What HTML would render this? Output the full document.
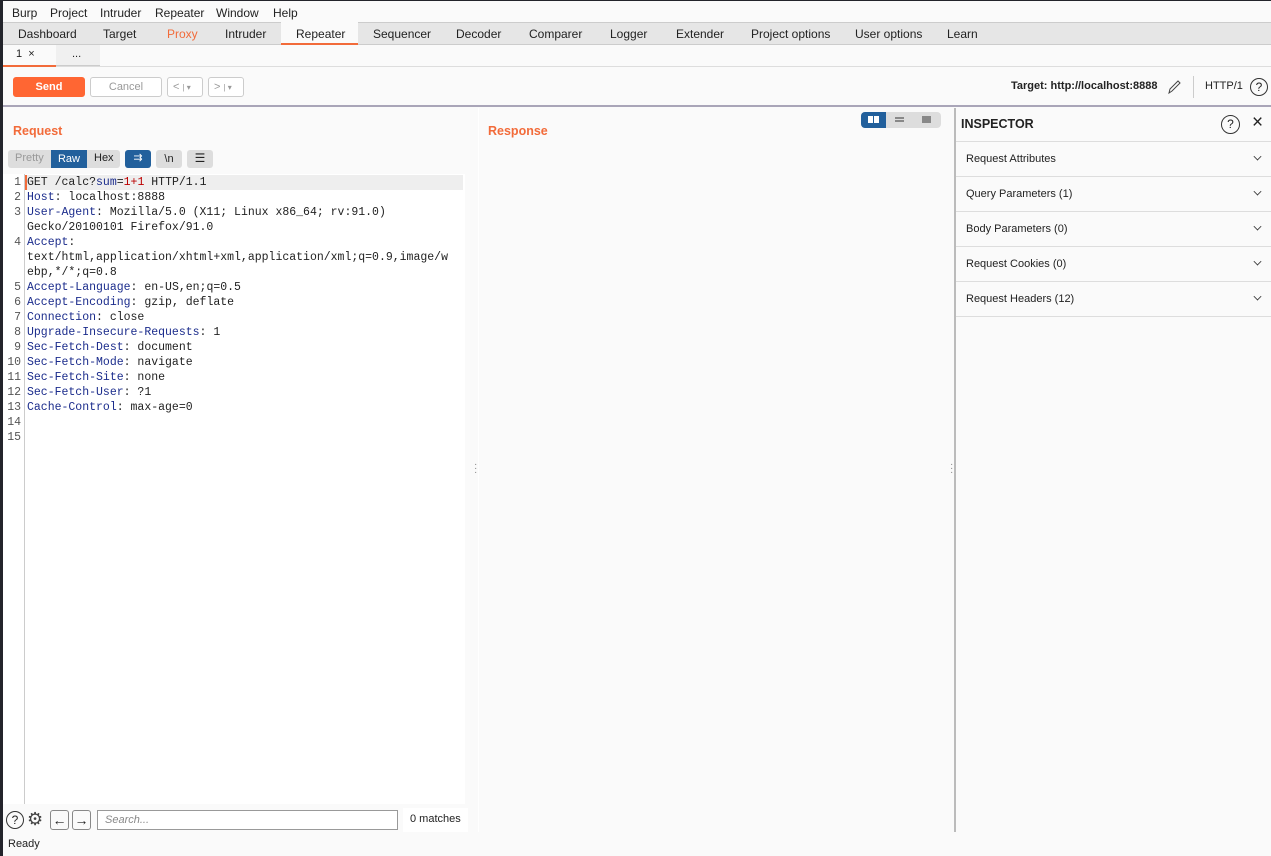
<!DOCTYPE html>
<html><head><meta charset="utf-8"><style>
*{box-sizing:border-box;margin:0;padding:0}
body{width:1271px;height:856px;overflow:hidden;background:#fafafa;font-family:"Liberation Sans",sans-serif;font-size:12px;color:#222;position:relative}
.abs{position:absolute}
.leftbar{left:0;top:0;width:3px;height:856px;background:#23242b}
.menu{left:3px;top:0;right:0;height:22px;background:#fafafa;border-top:1px solid #23242b}
.menu span{position:absolute;top:5px;font-size:12px}
.tabs{left:3px;top:22px;right:0;height:23px;background:#e6e6e6;border-top:1px solid #ccc;border-bottom:1px solid #ccc}
.tabs span{position:absolute;top:4px;font-size:12px}
.sub{left:3px;top:45px;right:0;height:22px;background:#fafafa;border-bottom:1px solid #ddd}
.btn{position:absolute;height:20px;border:1px solid #ccc;border-radius:3px;background:#fff;font-size:11px;color:#999;text-align:center;line-height:18px}
.mono{font-family:"Liberation Mono",monospace;font-size:11.5px;line-height:15px}
.k{color:#1b2c8c}
.insp div.row{position:absolute;left:0;right:0;height:35px;border-bottom:1px solid #ddd;font-size:11px;padding:11px 10px}
.chev{position:absolute;right:10px;top:11px;width:7px;height:7px;border-right:1.5px solid #333;border-bottom:1.5px solid #333;transform:rotate(45deg) scale(.8)}
</style></head><body>
<div class="abs leftbar"></div>
<div class="abs menu">
<span style="left:9px">Burp</span><span style="left:47px">Project</span><span style="left:97px">Intruder</span><span style="left:152px">Repeater</span><span style="left:213px">Window</span><span style="left:270px">Help</span>
</div>
<div class="abs tabs">
<span style="left:15px">Dashboard</span><span style="left:100px">Target</span><span style="left:164px;color:#f26b3a">Proxy</span><span style="left:222px">Intruder</span>
<div class="abs" style="left:278px;top:-1px;width:77px;height:23px;background:#fafafa;border-bottom:2px solid #f26b3a"></div>
<span style="left:293px">Repeater</span><span style="left:370px">Sequencer</span><span style="left:453px">Decoder</span><span style="left:526px">Comparer</span><span style="left:607px">Logger</span><span style="left:673px">Extender</span><span style="left:748px">Project options</span><span style="left:852px">User options</span><span style="left:944px">Learn</span>
</div>
<div class="abs sub">
<div class="abs" style="left:0;top:0;width:53px;height:22px;border-bottom:2px solid #f26b3a;font-size:11px;padding:3px 13px">1 &nbsp;×</div>
<div class="abs" style="left:53px;top:0;width:44px;height:21px;border-bottom:1px solid #ccc;background:#f0f0f0;font-size:11px;padding:3px 16px">...</div>
</div>
<div class="abs" style="left:3px;top:67px;right:0;height:40px;background:#fafafa;border-bottom:2px solid #a9a5b8"></div>
<div class="btn" style="left:13px;top:77px;width:72px;background:#ff6633;border-color:#ff6633;color:#fff;font-weight:bold">Send</div>
<div class="btn" style="left:90px;top:77px;width:72px">Cancel</div>
<div class="btn" style="left:167px;top:77px;width:36px;text-align:left;padding-left:5px">&lt; <span style="font-size:8px">| ▾</span></div>
<div class="btn" style="left:208px;top:77px;width:36px;text-align:left;padding-left:5px">&gt; <span style="font-size:8px">| ▾</span></div>
<div class="abs" style="left:1011px;top:80px;font-size:11px;font-weight:bold">Target: http://localhost:8888</div>
<svg class="abs" style="left:1166px;top:78px" width="16" height="18"><path d="M3 15 L4 11 L12 3 L14 5 L6 13 Z" fill="none" stroke="#444" stroke-width="1"/></svg>
<div class="abs" style="left:1193px;top:76px;width:1px;height:22px;background:#ccc"></div>
<div class="abs" style="left:1205px;top:80px;font-size:11px">HTTP/1</div>
<div class="abs" style="left:1250px;top:78px;width:18px;height:18px;border:1.3px solid #333;border-radius:50%;font-size:12px;text-align:center;line-height:16px">?</div>

<!-- request panel -->
<div class="abs" style="left:3px;top:108px;width:469px;height:724px;background:#fafafa"></div>
<div class="abs" style="left:13px;top:124px;font-size:12.5px;font-weight:bold;color:#f26b3a">Request</div>
<div class="abs" style="left:8px;top:150px;width:112px;height:18px;background:#ddd;border-radius:3px"></div>
<div class="abs" style="left:15px;top:152px;font-size:11px;color:#999">Pretty</div>
<div class="abs" style="left:51px;top:150px;width:36px;height:18px;background:#22609c;color:#fff;font-size:11px;text-align:center;line-height:18px">Raw</div>
<div class="abs" style="left:94px;top:152px;font-size:11px">Hex</div>
<div class="abs" style="left:125px;top:150px;width:26px;height:18px;background:#22609c;border-radius:3px;color:#fff;text-align:center;line-height:17px;font-size:11px">⇉</div>
<div class="abs" style="left:156px;top:150px;width:26px;height:18px;background:#ddd;border-radius:3px;text-align:center;line-height:18px;font-size:11px">\n</div>
<div class="abs" style="left:187px;top:150px;width:26px;height:18px;background:#ddd;border-radius:3px;text-align:center;line-height:17px;font-size:12px">☰</div>
<div class="abs" style="left:3px;top:174px;width:462px;height:630px;background:#fff"></div>
<div class="abs" style="left:24px;top:174px;width:1px;height:630px;background:#ccc"></div>
<div class="abs" style="left:25px;top:175px;width:438px;height:15px;background:#eee"></div>
<div class="abs" style="left:25px;top:175px;width:2px;height:15px;background:#f26b3a"></div>
<div class="abs mono" style="left:5px;top:175px;color:#555;text-align:right;width:16px">1<br>2<br>3<br><br>4<br><br><br>5<br>6<br>7<br>8<br>9<br>10<br>11<br>12<br>13<br>14<br>15</div>
<div class="abs mono" style="left:27px;top:175px;white-space:pre">GET /calc?<span class="k">sum</span>=<span style="color:#b00">1+1</span> HTTP/1.1
<span class="k">Host</span>: localhost:8888
<span class="k">User-Agent</span>: Mozilla/5.0 (X11; Linux x86_64; rv:91.0)
Gecko/20100101 Firefox/91.0
<span class="k">Accept</span>:
text/html,application/xhtml+xml,application/xml;q=0.9,image/w
ebp,*/*;q=0.8
<span class="k">Accept-Language</span>: en-US,en;q=0.5
<span class="k">Accept-Encoding</span>: gzip, deflate
<span class="k">Connection</span>: close
<span class="k">Upgrade-Insecure-Requests</span>: 1
<span class="k">Sec-Fetch-Dest</span>: document
<span class="k">Sec-Fetch-Mode</span>: navigate
<span class="k">Sec-Fetch-Site</span>: none
<span class="k">Sec-Fetch-User</span>: ?1
<span class="k">Cache-Control</span>: max-age=0</div>
<div class="abs" style="left:6px;top:811px;width:18px;height:18px;border:1.3px solid #333;border-radius:50%;text-align:center;line-height:16px;font-size:12px">?</div>
<div class="abs" style="left:27px;top:809px;font-size:18px;color:#444">⚙</div>
<div class="abs" style="left:50px;top:810px;width:19px;height:20px;border:1px solid #888;border-radius:3px;text-align:center;line-height:18px;font-size:14px">←</div>
<div class="abs" style="left:72px;top:810px;width:19px;height:20px;border:1px solid #888;border-radius:3px;text-align:center;line-height:18px;font-size:14px">→</div>
<div class="abs" style="left:97px;top:810px;width:301px;height:20px;border:1px solid #999;background:#fff;font-size:11px;font-style:italic;color:#888;padding:3px 7px">Search...</div>
<div class="abs" style="left:403px;top:808px;width:65px;height:24px;background:#fff;font-size:11px;padding:5px 7px">0 matches</div>
<div class="abs" style="left:474px;top:463px;color:#888;font-size:10px;line-height:4px">·<br>·<br>·</div>
<div class="abs" style="left:950px;top:463px;color:#888;font-size:10px;line-height:4px">·<br>·<br>·</div>
<div class="abs" style="left:8px;top:838px;font-size:11px">Ready</div>

<!-- response -->
<div class="abs" style="left:478px;top:108px;width:470px;height:724px;background:#fafafa;border-left:1px solid #fff"></div>
<div class="abs" style="left:488px;top:124px;font-size:12.5px;font-weight:bold;color:#f26b3a">Response</div>
<div class="abs" style="left:861px;top:112px;width:80px;height:16px;background:#ddd;border-radius:4px"></div>
<div class="abs" style="left:861px;top:112px;width:25px;height:16px;background:#22609c;border-radius:4px 0 0 4px"></div>
<div class="abs" style="left:868px;top:116px;width:5px;height:7px;background:#fff"></div>
<div class="abs" style="left:874px;top:116px;width:5px;height:7px;background:#fff"></div>
<div class="abs" style="left:895px;top:117px;width:9px;height:2px;background:#888"></div>
<div class="abs" style="left:895px;top:120px;width:9px;height:2px;background:#888"></div>
<div class="abs" style="left:922px;top:116px;width:9px;height:7px;background:#888"></div>

<!-- inspector -->
<div class="abs" style="left:954px;top:108px;width:2px;height:724px;background:#bbb"></div>
<div class="abs insp" style="left:956px;top:108px;width:315px;height:724px;background:#fafafa">
<div class="abs" style="left:5px;top:9px;font-size:12.5px;font-weight:bold">INSPECTOR</div>
<div class="abs" style="left:265px;top:7px;width:19px;height:19px;border:1.3px solid #333;border-radius:50%;text-align:center;line-height:17px;font-size:12px">?</div>
<div class="abs" style="left:296px;top:4px;font-size:19px">×</div>
<div class="abs" style="left:0;right:0;top:33px;height:1px;background:#ddd"></div>
<div class="row" style="top:34px">Request Attributes<i class="chev"></i></div>
<div class="row" style="top:69px">Query Parameters (1)<i class="chev"></i></div>
<div class="row" style="top:104px">Body Parameters (0)<i class="chev"></i></div>
<div class="row" style="top:139px">Request Cookies (0)<i class="chev"></i></div>
<div class="row" style="top:174px">Request Headers (12)<i class="chev"></i></div>
</div>
</body></html>
